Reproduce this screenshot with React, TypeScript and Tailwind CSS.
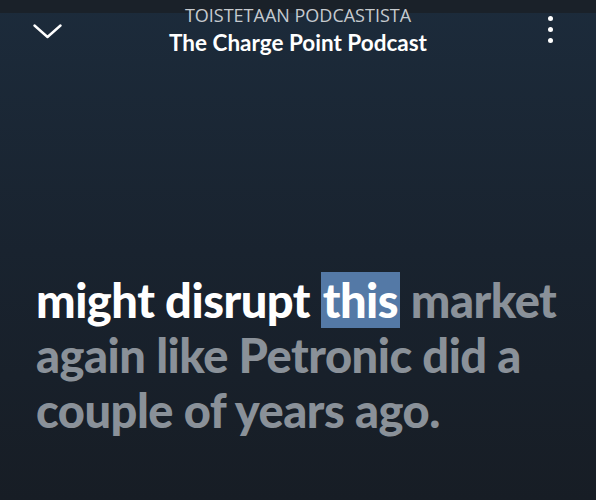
export default function App() {
  return (
    <div className="w-[596px] h-[500px] overflow-hidden flex flex-col bg-gradient-to-b from-[#1c2b3b] via-[#19232f] to-[#171d25] font-['Lato',sans-serif]">
      <div className="h-[13px] bg-[#1a2129] shrink-0" />
      <div className="relative h-[50px] shrink-0">
        <svg className="absolute left-[33px] top-[11px]" width="29" height="15" viewBox="0 0 29 15" fill="none">
          <path d="M1.5 1.5 L14.5 13 L27.5 1.5" stroke="white" strokeWidth="2.4" strokeLinecap="round" strokeLinejoin="round" />
        </svg>
        <div className="flex flex-col items-center">
          <div className="text-[18px] leading-[20px] tracking-[0px] text-[#c6cacf] -mt-[8px] font-['Open_Sans',sans-serif]">TOISTETAAN PODCASTISTA</div>
          <div className="text-[22.5px] leading-[28px] font-bold text-white mt-[4px]">The Charge Point Podcast</div>
        </div>
        <div className="absolute left-[548px] top-[3px] flex flex-col gap-[6px]">
          <span className="block w-[5px] h-[5px] rounded-full bg-white" />
          <span className="block w-[5px] h-[5px] rounded-full bg-white" />
          <span className="block w-[5px] h-[5px] rounded-full bg-white" />
        </div>
      </div>
      <div className="pl-[36px] pt-[210px] text-[47px] leading-[55px] font-black tracking-[-0.5px] text-[#8a9199]">
        <div>
          <span className="text-white">might disrupt </span>
          <span className="text-white bg-[#5479a6] px-[2px]">this</span>
          <span> market</span>
        </div>
        <div>again like Petronic did a</div>
        <div>couple of years ago.</div>
      </div>
    </div>
  )
}
